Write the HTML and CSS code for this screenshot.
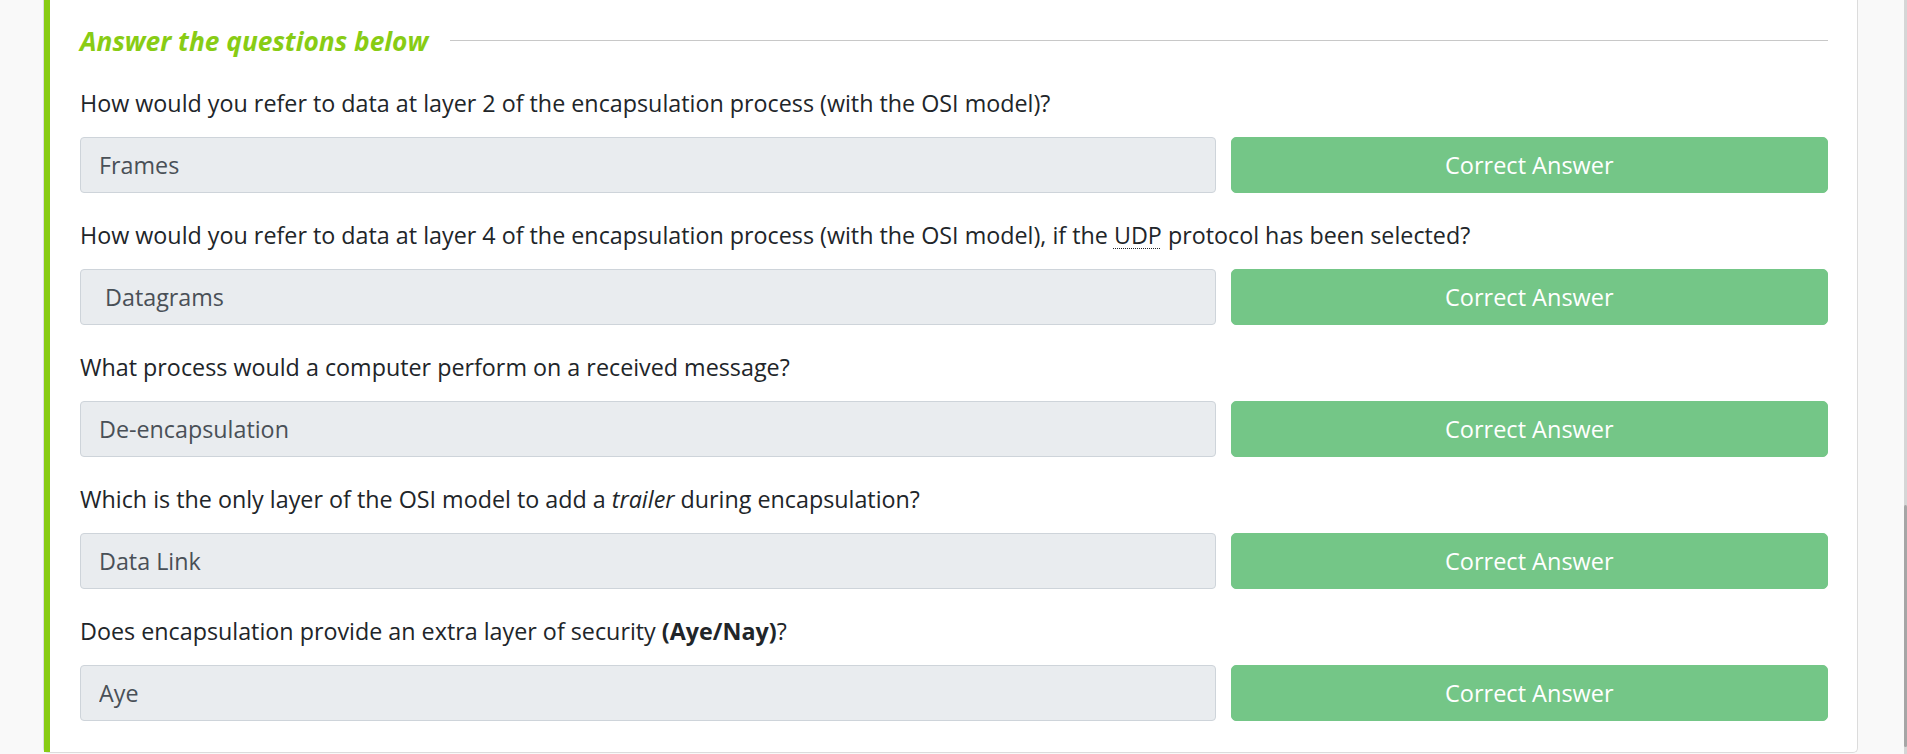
FILE: index.html
```html
<!DOCTYPE html>
<html lang="en">
<head>
<meta charset="utf-8">
<title>Answer the questions below</title>
<link rel="stylesheet" href="styles.css">
</head>
<body>
<div class="page">
  <section class="card">
    <div class="card-inner">
      <div class="heading-row">
        <h5 class="heading">Answer the questions below</h5>
        <div class="heading-line"></div>
      </div>

      <div class="qa">
        <p class="question">How would you refer to data at layer 2 of the encapsulation process (with the OSI model)?</p>
        <div class="answer-row">
          <input class="answer" type="text" value="Frames" disabled>
          <button class="btn-correct" disabled>Correct Answer</button>
        </div>
      </div>

      <div class="qa">
        <p class="question">How would you refer to data at layer 4 of the encapsulation process (with the OSI model), if the <abbr class="abbr" title="User Datagram Protocol">UDP</abbr> protocol has been selected?</p>
        <div class="answer-row">
          <input class="answer" type="text" value=" Datagrams" disabled>
          <button class="btn-correct" disabled>Correct Answer</button>
        </div>
      </div>

      <div class="qa">
        <p class="question">What process would a computer perform on a received message?</p>
        <div class="answer-row">
          <input class="answer" type="text" value="De-encapsulation" disabled>
          <button class="btn-correct" disabled>Correct Answer</button>
        </div>
      </div>

      <div class="qa">
        <p class="question">Which is the only layer of the OSI model to add a <em>trailer</em> during encapsulation?</p>
        <div class="answer-row">
          <input class="answer" type="text" value="Data Link" disabled>
          <button class="btn-correct" disabled>Correct Answer</button>
        </div>
      </div>

      <div class="qa">
        <p class="question">Does encapsulation provide an extra layer of security <strong>(Aye/Nay)</strong>?</p>
        <div class="answer-row">
          <input class="answer" type="text" value="Aye" disabled>
          <button class="btn-correct" disabled>Correct Answer</button>
        </div>
      </div>
    </div>
  </section>
</div>
<div class="scrollbar"><div class="scrollbar-thumb"></div></div>
</body>
</html>
```

FILE: styles.css
```css
html, body {
  margin: 0;
  padding: 0;
  background: #f9f9f9;
  font-family: "Open Sans", "Noto Sans", sans-serif;
  color: #212529;
  overflow: hidden;
}

.page {
  padding-left: 43px;
  height: 754px;
}

.card {
  width: 1815px;
  box-sizing: border-box;
  background: #ffffff;
  border: 1px solid #dcdcdc;
  border-top: none;
  border-radius: 0 0 5px 5px;
}

.card-inner {
  border-left: 6px solid #88cc14;
  padding: 20px 29px 31px 30px;
}

.heading-row {
  display: flex;
  align-items: center;
  height: 42px;
}

.heading {
  margin: 0;
  font-size: 26.3px;
  line-height: 42px;
  font-weight: 700;
  font-style: italic;
  color: #88cc14;
  white-space: nowrap;
}

.heading-line {
  flex: 1;
  height: 1px;
  background: #c8c8c8;
  margin-left: 22px;
  margin-top: -2px;
}

.qa {
  margin-top: 26px;
}

.qa + .qa {
  margin-top: 27px;
}

.question {
  margin: 0 0 19px 0;
  font-size: 23.3px;
  line-height: 30px;
  white-space: nowrap;
}

.question strong {
  font-weight: 700;
}

.abbr {
  text-decoration: underline dotted;
  text-decoration-thickness: 1px;
  text-underline-offset: 4px;
  cursor: help;
}

.answer-row {
  display: grid;
  grid-template-columns: 1135fr 597fr;
  column-gap: 15px;
  height: 56px;
}

.answer {
  box-sizing: border-box;
  height: 56px;
  width: 100%;
  margin: 0;
  padding: 0 18px;
  font-family: inherit;
  font-size: 23.3px;
  color: #495057;
  background: #e9ecef;
  border: 1px solid #ced4da;
  border-radius: 4px;
  white-space: pre;
  -webkit-text-fill-color: #495057;
  opacity: 1;
}

.btn-correct {
  box-sizing: border-box;
  height: 56px;
  margin: 0;
  padding: 0;
  font-family: inherit;
  font-size: 23.5px;
  color: #ffffff;
  background: #74c687;
  border: 1px solid #74c687;
  border-radius: 5px;
}

.scrollbar {
  position: absolute;
  top: 0;
  right: 0;
  width: 3px;
  height: 754px;
  background: #d6d6d6;
}

.scrollbar-thumb {
  position: absolute;
  top: 505px;
  left: 0;
  width: 3px;
  height: 242px;
  border-radius: 2px;
  background: #a6a6a6;
}
```
